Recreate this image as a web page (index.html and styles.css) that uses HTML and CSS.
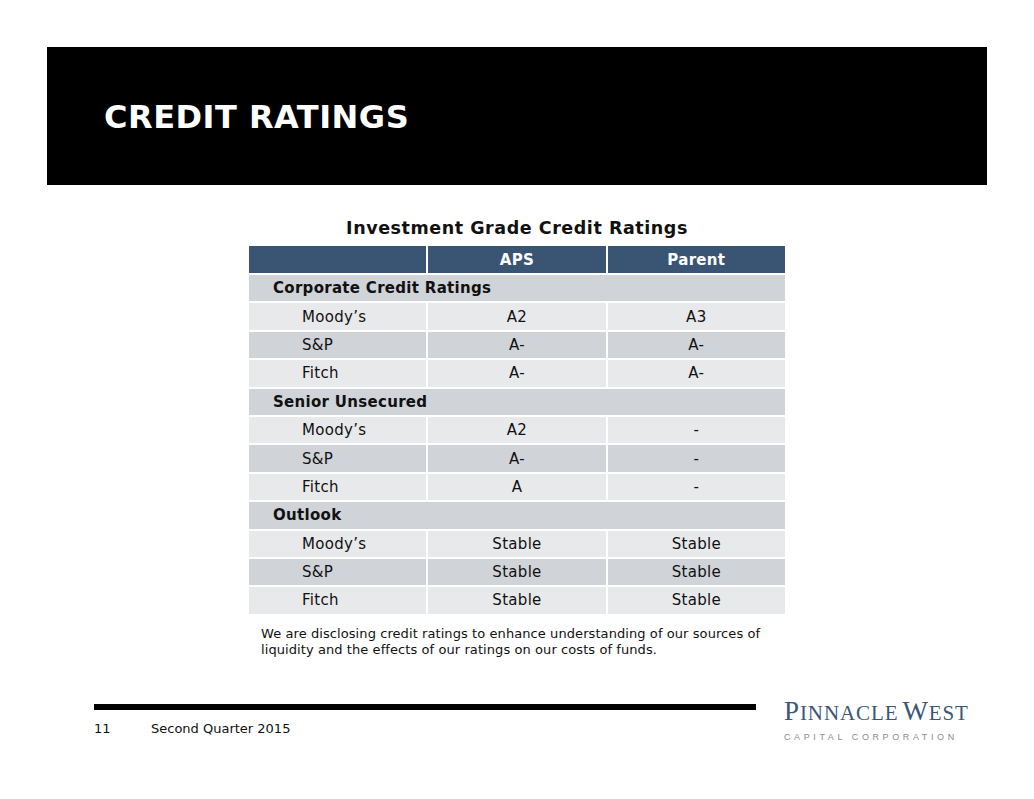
FILE: index.html
```html
<!DOCTYPE html>
<html lang="en">
<head>
<meta charset="utf-8">
<title>Credit Ratings</title>
<link rel="stylesheet" href="styles.css">
</head>
<body>
<div class="page">
  <header class="banner">
    <h1 class="banner-title">CREDIT RATINGS</h1>
  </header>

  <main class="content">
    <h2 class="table-title">Investment Grade Credit Ratings</h2>
    <div class="ratings">
      <div class="cell head"></div>
      <div class="cell head">APS</div>
      <div class="cell head">Parent</div>

      <div class="cell section dark">Corporate Credit Ratings</div>
      <div class="cell label light">Moody’s</div><div class="cell val light">A2</div><div class="cell val light">A3</div>
      <div class="cell label dark">S&amp;P</div><div class="cell val dark">A-</div><div class="cell val dark">A-</div>
      <div class="cell label light">Fitch</div><div class="cell val light">A-</div><div class="cell val light">A-</div>

      <div class="cell section dark">Senior Unsecured</div>
      <div class="cell label light">Moody’s</div><div class="cell val light">A2</div><div class="cell val light">-</div>
      <div class="cell label dark">S&amp;P</div><div class="cell val dark">A-</div><div class="cell val dark">-</div>
      <div class="cell label light">Fitch</div><div class="cell val light">A</div><div class="cell val light">-</div>

      <div class="cell section dark">Outlook</div>
      <div class="cell label light">Moody’s</div><div class="cell val light">Stable</div><div class="cell val light">Stable</div>
      <div class="cell label dark">S&amp;P</div><div class="cell val dark">Stable</div><div class="cell val dark">Stable</div>
      <div class="cell label light">Fitch</div><div class="cell val light">Stable</div><div class="cell val light">Stable</div>
    </div>
    <p class="note">We are disclosing credit ratings to enhance understanding of our sources of liquidity and the effects of our ratings on our costs of funds.</p>
  </main>

  <footer class="footer">
    <div class="footer-left">
      <div class="footer-bar"></div>
      <div class="footer-text">
        <span class="page-num">11</span>
        <span class="period">Second Quarter 2015</span>
      </div>
    </div>
    <div class="logo">
      <div class="logo-name"><span class="big">P</span><span class="small">INNACLE</span><span class="sp"></span><span class="big">W</span><span class="small">EST</span></div>
      <div class="logo-sub">CAPITAL CORPORATION</div>
    </div>
  </footer>
</div>
</body>
</html>
```

FILE: styles.css
```css
html, body {
  margin: 0;
  padding: 0;
  background: #ffffff;
}

.page {
  width: 1034px;
  height: 799px;
  font-family: "DejaVu Sans", Verdana, sans-serif;
  color: #111111;
  display: flex;
  flex-direction: column;
  overflow: hidden;
}

.banner {
  margin: 47px 47px 0 47px;
  height: 138px;
  background: #000000;
  box-sizing: border-box;
  padding: 51px 0 0 57px;
}

.banner-title {
  margin: 0;
  font-size: 32px;
  line-height: 38px;
  font-weight: bold;
  color: #ffffff;
  letter-spacing: 0.5px;
}

.content {
  width: 536px;
  margin: 33px auto 0 auto;
  display: flex;
  flex-direction: column;
}

.table-title {
  margin: 0 0 8px 0;
  font-size: 17.5px;
  line-height: 20px;
  font-weight: bold;
  text-align: center;
  color: #111111;
  letter-spacing: 0.55px;
}

.ratings {
  display: grid;
  grid-template-columns: 1fr 1fr 1fr;
  grid-template-rows: 27px;
  grid-auto-rows: 26.4px;
  column-gap: 2px;
  row-gap: 2px;
  font-size: 15px;
  letter-spacing: 0.3px;
}

.cell {
  display: flex;
  align-items: center;
  white-space: nowrap;
}

.head {
  background: #3a5574;
  color: #ffffff;
  font-weight: bold;
  justify-content: center;
}

.section {
  grid-column: 1 / 4;
  font-weight: bold;
  padding-left: 24px;
}

.label {
  padding-left: 53px;
}

.val {
  justify-content: center;
}

.dark {
  background: #d0d3d8;
}

.light {
  background: #e8e9eb;
}

.note {
  margin: 12px 0 0 12px;
  font-size: 13px;
  line-height: 16px;
  color: #111111;
  letter-spacing: 0.08px;
}

.footer {
  margin-top: auto;
  margin-bottom: 57px;
  display: flex;
  align-items: flex-start;
  padding-left: 94px;
}

.footer-left {
  width: 662px;
  padding-top: 6px;
}

.footer-bar {
  height: 6px;
  background: #000000;
}

.footer-text {
  margin-top: 11px;
  font-size: 13px;
  line-height: 16px;
  display: flex;
}

.page-num {
  width: 57px;
}

.logo {
  margin-left: 28px;
  font-family: "Liberation Serif", "Times New Roman", serif;
  color: #3b5677;
}

.logo-name {
  line-height: 27px;
  white-space: nowrap;
  letter-spacing: 0.9px;
}

.logo-name .big {
  font-size: 27px;
}

.logo-name .small {
  font-size: 21px;
}

.logo-name .sp {
  display: inline-block;
  width: 4px;
}

.logo-sub {
  margin-top: 4px;
  font-family: "Liberation Sans", Arial, sans-serif;
  font-size: 9px;
  line-height: 10px;
  letter-spacing: 3.6px;
  color: #8c8c8c;
  white-space: nowrap;
}
```
